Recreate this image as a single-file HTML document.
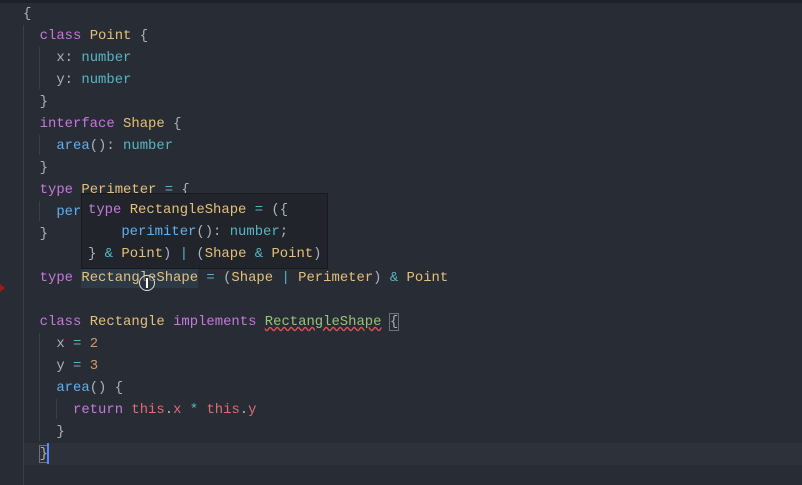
<!DOCTYPE html><html><head><style>
body{margin:0;width:802px;height:485px;background:#282c34;overflow:hidden;position:relative;font-family:"Liberation Mono",monospace;font-size:13.9px;color:#abb2bf}
.top{position:absolute;left:0;top:0;width:802px;height:3px;background:#1e2127}
.l{position:absolute;left:23px;height:22px;line-height:22px;white-space:pre}
.k{color:#c678dd}.c{color:#e5c07b}.n{color:#56b6c2}.f{color:#61afef}.t{color:#e06c75}.d{color:#d19a66}.g{color:#98c379}
.gd{position:absolute;width:1px;background:#3b4048}
.cur{position:absolute;left:23px;top:443px;width:779px;height:22px;background:#2c313a}
.tip{position:absolute;left:81px;top:193px;width:245px;height:74px;background:#21252b;border:1px solid #181a1f}
.tip .l{left:6px}
.code .l{margin-top:1px}
</style></head><body>
<div class="top"></div>
<div class="cur"></div>
<div class="gd" style="left:23px;top:25px;height:460px"></div>
<div class="gd" style="left:39px;top:47px;height:42px"></div>
<div class="gd" style="left:39px;top:135px;height:20px"></div>
<div class="gd" style="left:39px;top:201px;height:20px"></div>
<div class="gd" style="left:39px;top:333px;height:108px"></div>
<div class="gd" style="left:56px;top:399px;height:20px"></div>
<div style="position:absolute;left:81px;top:268px;width:117px;height:20px;background:#2c3a48"></div>
<div style="position:absolute;left:0;top:284px;width:0;height:0;border-top:4px solid transparent;border-bottom:4px solid transparent;border-left:5px solid #a01818"></div>
<div class="code">
<div class="l" style="top:2px">{</div>
<div class="l" style="top:24px">  <span class="k">class</span> <span class="c">Point</span> {</div>
<div class="l" style="top:46px">    x: <span class="n">number</span></div>
<div class="l" style="top:68px">    y: <span class="n">number</span></div>
<div class="l" style="top:90px">  }</div>
<div class="l" style="top:112px">  <span class="k">interface</span> <span class="c">Shape</span> {</div>
<div class="l" style="top:134px">    <span class="f">area</span>(): <span class="n">number</span></div>
<div class="l" style="top:156px">  }</div>
<div class="l" style="top:178px">  <span class="k">type</span> <span class="c">Perimeter</span> <span class="n">=</span> {</div>
<div class="l" style="top:200px">    <span class="f">per</span></div>
<div class="l" style="top:222px">  }</div>
<div class="l" style="top:266px">  <span class="k">type</span> <span class="c">RectangleShape</span> <span class="n">=</span> (<span class="c">Shape</span> <span class="n">|</span> <span class="c">Perimeter</span>) <span class="n">&amp;</span> <span class="c">Point</span></div>
<div class="l" style="top:310px">  <span class="k">class</span> <span class="c">Rectangle</span> <span class="k">implements</span> <span class="g" style="text-decoration:underline wavy #e05252">RectangleShape</span> <span style="outline:1px solid #6b717d">{</span></div>
<div class="l" style="top:332px">    x <span class="n">=</span> <span class="d">2</span></div>
<div class="l" style="top:354px">    y <span class="n">=</span> <span class="d">3</span></div>
<div class="l" style="top:376px">    <span class="f">area</span>() {</div>
<div class="l" style="top:398px">      <span class="k">return</span> <span class="t">this</span>.<span class="t">x</span> <span class="n">*</span> <span class="t">this</span>.<span class="t">y</span></div>
<div class="l" style="top:420px">    }</div>
<div class="l" style="top:442px">  <span style="outline:1px solid #6b717d">}</span></div>
</div>
<div style="position:absolute;left:47px;top:443px;width:2px;height:21px;background:#528bff"></div>
<div class="tip">
<div class="l" style="top:5px"><span class="k">type</span> <span class="c">RectangleShape</span> <span class="n">=</span> ({</div>
<div class="l" style="top:27px">    <span class="f">perimiter</span>(): <span class="n">number</span>;</div>
<div class="l" style="top:49px">} <span class="n">&amp;</span> <span class="c">Point</span>) <span class="n">|</span> (<span class="c">Shape</span> <span class="n">&amp;</span> <span class="c">Point</span>)</div>
</div>
<div style="position:absolute;left:139px;top:275px;width:16px;height:16px;border-radius:50%;border:1px solid #ddd;box-sizing:border-box;background:rgba(40,44,52,.5)"></div>
<div style="position:absolute;left:146px;top:278px;width:2px;height:10px;background:#fff"></div>
</body></html>
